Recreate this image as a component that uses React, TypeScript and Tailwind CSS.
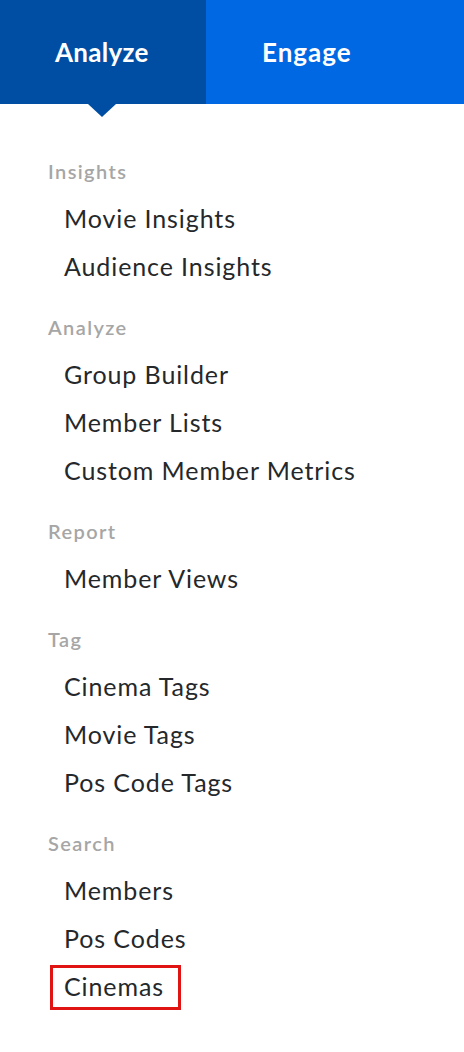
import React from 'react'

const sections = [
  { title: 'Insights', items: ['Movie Insights', 'Audience Insights'] },
  { title: 'Analyze', items: ['Group Builder', 'Member Lists', 'Custom Member Metrics'] },
  { title: 'Report', items: ['Member Views'] },
  { title: 'Tag', items: ['Cinema Tags', 'Movie Tags', 'Pos Code Tags'] },
  { title: 'Search', items: ['Members', 'Pos Codes', 'Cinemas'] },
]

export default function App() {
  return (
    <div className="w-[464px] min-h-[1052px] bg-white font-['Lato','Noto_Sans',sans-serif]">
      {/* Tabs */}
      <div className="flex h-[104px]">
        <div className="relative w-[206px] shrink-0 bg-[#004ea4] flex items-center pl-[55px]">
          <span className="text-white text-[26px] font-bold tracking-[0.3px]">Analyze</span>
          <div className="absolute left-[88px] top-full w-0 h-0 border-l-[14px] border-r-[14px] border-t-[13px] border-l-transparent border-r-transparent border-t-[#004ea4]" />
        </div>
        <div className="flex-1 bg-[#0068e3] flex items-center pl-[56px]">
          <span className="text-white text-[26px] font-bold tracking-[1px]">Engage</span>
        </div>
      </div>

      {/* Menu */}
      <nav className="pt-[43px] pl-[48px] flex flex-col gap-[12px]">
        {sections.map(section => (
          <div key={section.title} className="flex flex-col">
            <div className="h-[48px] flex items-center text-[20px] font-semibold tracking-[1.4px] text-[#a6a6a6]">
              {section.title}
            </div>
            {section.items.map(item => (
              <div key={item} className="h-[48px] flex items-center">
                {item === 'Cinemas' ? (
                  <span className="ml-[2px] h-[45px] w-[131px] border-[3px] border-[#e11414] flex items-center pl-[11px] text-[25px] tracking-[0.9px] text-[#25282b]">
                    {item}
                  </span>
                ) : (
                  <span className="pl-[16px] text-[25px] tracking-[0.9px] text-[#25282b]">{item}</span>
                )}
              </div>
            ))}
          </div>
        ))}
      </nav>
    </div>
  )
}
